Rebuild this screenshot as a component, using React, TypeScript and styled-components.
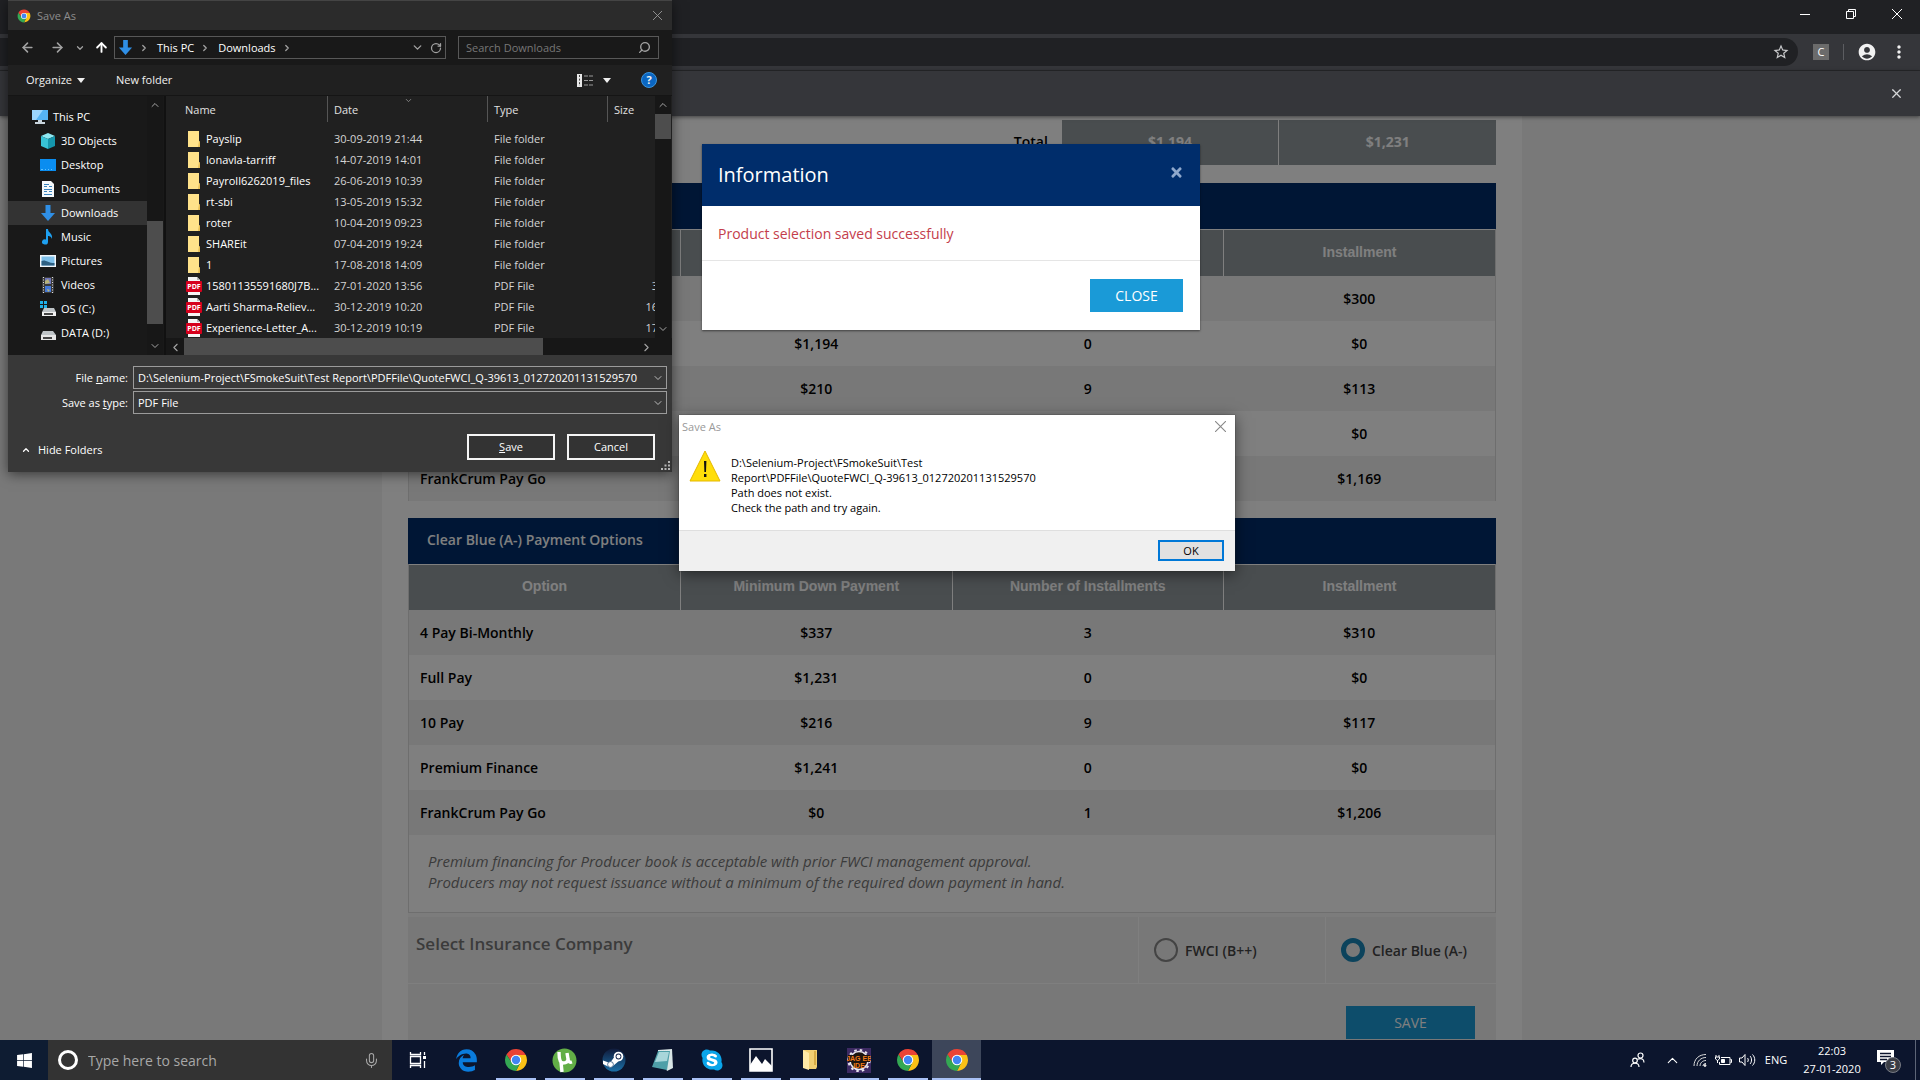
import React from 'react';
import styled, { createGlobalStyle, css } from 'styled-components';
import { FaEdgeLegacy, FaSkype, FaTimes, FaWindows } from 'react-icons/fa';
import { MdAccountCircle, MdMoreVert, MdStarBorder } from 'react-icons/md';
import {
  ArrowLeft, ArrowRight, ArrowUp, ChevronDown, ChevronLeft, ChevronRight, ChevronUp, Mic, RotateCw, Search, X,
} from 'lucide-react';

const GlobalStyle = createGlobalStyle`
  *, *::before, *::after { box-sizing: border-box; }
  body { margin: 0; overflow: hidden; font-family: "Open Sans", "Noto Sans", sans-serif; }
  button, input, select { font: inherit; color: inherit; margin: 0; }
  button { border: 0; padding: 0; background: none; cursor: pointer; }
  svg { display: block; flex: none; }
`;

/* ---------- desktop and browser ---------- */

const Desktop = styled.div`
  position: relative;
  display: flex;
  flex-direction: column;
  height: 100vh;
  overflow: hidden;
`;

const Browser = styled.main`
  flex: 1;
  min-height: 0;
  display: flex;
  flex-direction: column;
`;

const TitleBar = styled.header`
  display: flex;
  justify-content: flex-end;
  height: 34px;
  background: #202124;
  color: #fff;
`;

const WindowButton = styled.button`
  display: grid;
  place-items: center;
  width: 46px;
  height: 28px;
`;

const Toolbar = styled.div`
  display: flex;
  align-items: center;
  height: 37px;
  padding-right: 10px;
  background: #35363a;
  border-bottom: 1px solid #27282b;
  color: #f1f1f1;
`;

const Omnibox = styled.div`
  flex: 1;
  display: flex;
  align-items: center;
  justify-content: flex-end;
  height: 28px;
  margin-right: 15px;
  padding-right: 8px;
  border-radius: 0 14px 14px 0;
  background: #202124;
  color: #c8c9cb;
`;

const Extension = styled.button`
  width: 16px;
  height: 16px;
  background: #6b6b6b;
  color: #fff;
  font-size: 11px;
  line-height: 16px;
`;

const Separator = styled.span`
  width: 1px;
  height: 16px;
  margin: 0 12px 0 14px;
  background: #5c5d61;
`;

const ToolbarButton = styled.button`
  display: grid;
  place-items: center;
  width: 22px;
  height: 28px;
  & + & { margin-left: 10px; }
`;

const InfoBar = styled.div`
  position: relative;
  display: flex;
  align-items: center;
  justify-content: flex-end;
  height: 45px;
  padding-right: 16px;
  background: #35363a;
  box-shadow: 0 1px 4px rgba(0, 0, 0, 0.5);
  color: #d5d6d8;
  z-index: 1;
`;

/* ---------- web page ---------- */

const Viewport = styled.div`
  position: relative;
  flex: 1;
  min-height: 0;
  overflow: hidden;
  padding-right: 16px;
  background: #f2f2f2;
`;

const Column = styled.div`
  max-width: 1140px;
  height: 100%;
  margin: 0 auto;
  padding: 4px 26px 0;
  background: #fff;
  color: #000;
  font-size: 14px;
  font-weight: 600;
`;

const TotalRow = styled.div`
  display: grid;
  grid-template-columns: 3fr 1fr 1fr;
  height: 45px;
  margin-bottom: 18px;
  line-height: 44px;
  text-align: center;
`;

const TotalLabel = styled.span`
  padding-right: 13px;
  text-align: right;
`;

const TotalCell = styled.span`
  border-left: 1px solid #fff;
  background: #939b9f;
  color: #fff;
  font-weight: 700;
`;

const Panel = styled.section<{ $closed?: boolean }>`
  border: 1px solid #dcdcdc;
  border-width: ${(p) => (p.$closed ? '0 1px 1px' : '0 1px')};
`;

const PanelTitle = styled.h2`
  height: 46px;
  margin: 0 -1px;
  padding-left: 19px;
  background: #002d6b;
  color: #fff;
  font-size: 14px;
  font-weight: 600;
  line-height: 44px;
`;

const OptionTable = styled.table`
  width: 100%;
  table-layout: fixed;
  border-collapse: collapse;
  border-top: 1px solid #fff;
  text-align: center;

  th {
    height: 46px;
    padding: 0 0 2px;
    background: #939b9f;
    color: #fff;
    font: bold 14px/20px "Liberation Sans", Arial, sans-serif;
  }
  th + th { border-left: 1px solid #fff; }
  td { height: 45px; padding: 0; }
  td:first-child { padding-left: 11px; text-align: left; }
  tbody tr:nth-child(odd) { background: #f1f1f1; }
`;

const Spacer = styled.div`
  height: 17px;
`;

const Note = styled.p`
  margin: 0;
  padding: 16px 19px 19px;
  color: #777;
  font-size: 15px;
  font-style: italic;
  font-weight: 500;
  line-height: 21px;
`;

const CompanyRow = styled.fieldset`
  display: flex;
  height: 71px;
  margin: 0;
  padding: 0;
  border: 0;
  border-top: 4px solid #f8f8f8;
  border-bottom: 1px solid #fff;
  background: #f1f1f1;
`;

const CompanyTitle = styled.h3`
  flex: 1;
  margin: 0;
  padding: 14px 0 0 8px;
  color: #777;
  font-size: 17px;
  font-weight: 600;
  line-height: 26px;
`;

const CompanyChoice = styled.label<{ $width: number }>`
  display: flex;
  align-items: center;
  gap: 7px;
  width: ${(p) => p.$width}px;
  padding-left: 15px;
  border-left: 1px solid #fff;
  color: #444;

  input {
    appearance: none;
    width: 24px;
    height: 24px;
    border: 2px solid #888;
    border-radius: 50%;
  }
  input:checked { border: 5px solid #1886b8; }
`;

const SaveRow = styled.div`
  display: flex;
  justify-content: flex-end;
  height: 100px;
  padding: 22px 21px 0 0;
  background: #f1f1f1;
`;

const BlueButton = styled.button<{ $wide?: boolean }>`
  width: ${(p) => (p.$wide ? 129 : 93)}px;
  height: 33px;
  background: #1a9ad7;
  color: #fff;
  font-size: 14px;
  font-weight: 400;
`;

const Backdrop = styled.div`
  position: absolute;
  inset: 0;
  display: flex;
  align-items: flex-start;
  justify-content: center;
  padding: 28px 18px 0 0;
  background: rgba(0, 0, 0, 0.5);
`;

const Modal = styled.section`
  width: 498px;
  background: #fff;
  box-shadow: 0 1px 2px rgba(0, 0, 0, 0.5);
  font-size: 14px;
`;

const ModalHeader = styled.header`
  display: flex;
  justify-content: space-between;
  height: 62px;
  padding: 0 16px;
  background: #002d6b;
  color: #fff;

  h2 {
    margin: 0;
    font-size: 20px;
    font-weight: 400;
    line-height: 61px;
  }
  button {
    height: 56px;
    color: #8fa8cc;
  }
`;

const ModalMessage = styled.p`
  margin: 0;
  padding: 17px 16px 16px;
  border-bottom: 1px solid #e5e5e5;
  color: #c43d4b;
  line-height: 21px;
`;

const ModalFooter = styled.footer`
  display: flex;
  justify-content: flex-end;
  padding: 18px 17px;
`;

/* ---------- Save As dialog ---------- */

const SaveDialog = styled.section`
  position: absolute;
  top: 0;
  left: 8px;
  width: 664px;
  z-index: 2;
  border-top: 1px solid #444;
  box-shadow: 0 2px 12px rgba(0, 0, 0, 0.55);
  background: #383838;
  color: #fff;
  font-size: 11px;
  line-height: 16px;
`;

const DialogTitle = styled.header`
  display: flex;
  align-items: center;
  gap: 6px;
  height: 29px;
  padding: 0 10px 0 9px;
  background: #2b2b2b;
  color: #8d8d8d;
  button { margin-left: auto; }
`;

const NavRow = styled.div`
  display: flex;
  align-items: center;
  height: 35px;
  padding: 0 13px 0 12px;
  background: #191919;
  color: #a2a2a2;
`;

const NavButton = styled.button<{ $width: number; $bright?: boolean }>`
  display: flex;
  width: ${(p) => p.$width}px;
  ${(p) => p.$bright && css`color: #fff;`}
`;

const AddressBar = styled.nav`
  display: flex;
  align-items: center;
  gap: 6px;
  width: 332px;
  height: 23px;
  padding: 0 3px;
  border: 1px solid #585858;
  button { color: inherit; }
  span { flex: 1; }
`;

const Crumb = styled.a`
  color: #fff;
  text-decoration: none;
  padding-left: 2px;
`;

const SearchBox = styled.label`
  flex: 1;
  display: flex;
  align-items: center;
  height: 23px;
  margin-left: 12px;
  padding: 0 7px;
  border: 1px solid #585858;

  input {
    flex: 1;
    min-width: 0;
    padding: 0;
    border: 0;
    outline: 0;
    background: none;
  }
  input::placeholder { color: #777; opacity: 1; }
  svg { transform: scaleX(-1); }
`;

const CommandRow = styled.div`
  display: flex;
  align-items: center;
  height: 31px;
  padding: 0 15px 0 18px;
  background: #202020;
  border-bottom: 1px solid #151515;
  color: #f0f0f0;
`;

const Command = styled.button`
  display: flex;
  align-items: center;
  gap: 5px;
  height: 24px;
  margin-right: 31px;
`;

const CommandTools = styled.div`
  display: flex;
  align-items: center;
  gap: 9px;
  margin-left: auto;
`;

const HelpButton = styled.button`
  width: 16px;
  height: 16px;
  margin-left: 21px;
  border: 1px solid #3b94dd;
  border-radius: 50%;
  background: #0a66c2;
  font-weight: 700;
  line-height: 14px;
`;

const Explorer = styled.div`
  display: flex;
  height: 259px;
`;

const Sidebar = styled.nav`
  display: flex;
  width: 158px;
  background: #191919;
  border-right: 2px solid #111;
`;

const Places = styled.ul`
  flex: 1;
  margin: 0;
  padding: 9px 0 0;
  list-style: none;
`;

const Place = styled.li<{ $root?: boolean; $active?: boolean }>`
  padding-left: ${(p) => (p.$root ? 24 : 32)}px;
  background: ${(p) => (p.$active ? '#333' : 'none')};
  a {
    display: flex;
    align-items: center;
    gap: 5px;
    height: 24px;
    color: #fff;
    text-decoration: none;
  }
`;

const ScrollBar = styled.div<{ $horizontal?: boolean }>`
  position: relative;
  display: flex;
  flex-direction: ${(p) => (p.$horizontal ? 'row' : 'column')};
  ${(p) => (p.$horizontal ? 'height: 17px;' : 'width: 16px; margin-right: 1px;')}
  background: #171717;
  color: #a5a5a5;
  button {
    display: grid;
    place-items: center;
    width: ${(p) => (p.$horizontal ? 18 : 16)}px;
    height: 18px;
  }
`;

const Thumb = styled.span<{ $size: number }>`
  flex: ${(p) => p.$size} 1 0;
  background: #4d4d4d;
`;

const Track = styled.span<{ $grow: number }>`
  flex: ${(p) => p.$grow} 1 0;
`;

const FilePane = styled.div`
  flex: 1;
  min-width: 0;
  display: flex;
  flex-direction: column;
  background: #202020;
`;

const FileArea = styled.div`
  flex: 1;
  min-height: 0;
  display: flex;
`;

const FileTable = styled.table`
  flex: 1;
  height: 242px;
  table-layout: fixed;
  border-collapse: collapse;
  text-align: left;

  th { height: 32px; padding: 0; vertical-align: top; font-weight: 400; color: #e0e0e0; }
  th span { position: relative; display: block; height: 26px; padding-left: 6px; border-left: 1px solid #555; line-height: 28px; }
  th:first-child span { padding-left: 18px; border-color: transparent; }
  td { height: 21px; padding: 0 0 0 7px; color: #d4d4d4; white-space: nowrap; }
  td:first-child { padding-left: 20px; color: #fff; }
  td:last-child { padding: 0; text-align: right; }
`;

const SortMark = styled(ChevronDown)`
  position: absolute;
  top: 0;
  left: calc(50% - 4px);
  color: #999;
`;

const FileName = styled.span`
  display: flex;
  align-items: center;
  gap: 4px;
`;

const FileSize = styled.span`
  display: block;
  margin-right: -3px;
`;

const SaveForm = styled.form`
  display: grid;
  grid-template-columns: 120px 1fr;
  gap: 2px 5px;
  padding: 11px 5px 12px 0;
  > label { text-align: right; line-height: 23px; }
`;

const Combo = styled.div`
  display: flex;
  align-items: center;
  height: 23px;
  padding: 0 2px 0 4px;
  border: 1px solid #9b9b9b;
  color: #bbb;

  input, select {
    flex: 1;
    min-width: 0;
    height: 21px;
    padding: 0;
    border: 0;
    outline: 0;
    appearance: none;
    background: none;
    color: #fff;
  }
`;

const FormFooter = styled.div`
  grid-column: 1 / -1;
  display: flex;
  align-items: flex-end;
  gap: 12px;
  padding: 18px 12px 0 13px;
`;

const HideFolders = styled.button`
  display: flex;
  align-items: center;
  gap: 7px;
  margin-right: auto;
  line-height: 20px;
`;

const OutlineButton = styled.button`
  width: 88px;
  height: 26px;
  border: 2px solid #f5f5f5;
  background: #333;
`;

const Grip = styled.svg`
  position: absolute;
  right: 2px;
  bottom: 2px;
`;

/* ---------- path error dialog ---------- */

const ErrorDialog = styled.section`
  position: absolute;
  top: 415px;
  left: 679px;
  width: 556px;
  z-index: 3;
  background: #fff;
  box-shadow: 0 3px 14px rgba(0, 0, 0, 0.5), 0 0 1px #333;
  color: #000;
  font-size: 11px;
  line-height: 15px;
`;

const ErrorTitle = styled.header`
  display: flex;
  align-items: center;
  justify-content: space-between;
  height: 23px;
  padding: 0 9px 0 3px;
  color: #999;
`;

const ErrorBody = styled.div`
  display: flex;
  gap: 10px;
  height: 92px;
  padding: 12px 10px 0;
  p { margin: 5px 0 0; white-space: pre-line; }
`;

const ErrorFooter = styled.footer`
  display: flex;
  justify-content: flex-end;
  padding: 9px 11px 10px;
  border-top: 1px solid #dfdfdf;
  background: #f0f0f0;
  button {
    width: 66px;
    height: 21px;
    border: 2px solid #0078d7;
    background: #e1e1e1;
  }
`;

/* ---------- taskbar ---------- */

const TaskBar = styled.footer`
  display: flex;
  align-items: stretch;
  height: 40px;
  background: #0c152d;
  color: #fff;
`;

const StartButton = styled.button`
  display: grid;
  place-items: center;
  width: 48px;
  background: #0e1c32;
`;

const TaskSearch = styled.label`
  display: flex;
  align-items: center;
  width: 344px;
  margin-right: 1px;
  padding: 0 12px 0 10px;
  background: #333;
  color: #a8a8a8;
  font-size: 14px;
  input {
    flex: 1;
    min-width: 0;
    margin-left: 10px;
    padding: 0;
    border: 0;
    outline: 0;
    background: none;
  }
  input::placeholder { color: #a8a8a8; opacity: 1; }
`;

const Ring = styled.span`
  width: 20px;
  height: 20px;
  border: 3px solid #fff;
  border-radius: 50%;
`;

const TaskButton = styled.button<{ $running?: boolean; $active?: boolean }>`
  display: grid;
  place-items: center;
  width: 49px;
  background: ${(p) => {
    const line = p.$active ? '100% 2px' : '40px 2px';
    return p.$running ? `linear-gradient(#a9c1f5, #a9c1f5) bottom / ${line} no-repeat` : 'none';
  }};
  background-color: ${(p) => (p.$active ? '#3d465a' : 'transparent')};
`;

const Tray = styled.div`
  display: flex;
  align-items: center;
  margin-left: auto;
  padding-right: 4px;
  font-size: 11px;
  line-height: 18px;
`;

const TrayButton = styled.button<{ $width: number }>`
  display: grid;
  place-items: center;
  width: ${(p) => p.$width}px;
  height: 40px;
`;

const Clock = styled.time`
  width: 78px;
  text-align: center;
  white-space: pre-line;
`;

const DesktopEdge = styled.span`
  width: 1px;
  height: 40px;
  margin-left: 8px;
  background: #5d6577;
`;

/* ---------- drawings ---------- */

const ChromeIcon = ({ size }: { size: number }) => (
  <svg width={size} height={size} viewBox="0 0 48 48">
    <path fill="#ea4335" d="M24 14h19.6A22 22 0 0 0 4.95 13L15.3 29Z" />
    <path fill="#fbc116" d="M24 14h19.6A22 22 0 0 1 24 46l8.7-17Z" />
    <path fill="#34a853" d="M32.7 29 24 46A22 22 0 0 1 4.95 13L15.3 29Z" />
    <circle cx="24" cy="24" r="10.5" fill="#fff" />
    <circle cx="24" cy="24" r="8.4" fill="#4285f4" />
  </svg>
);

const DownloadArrow = ({ size = 16 }: { size?: number }) => (
  <svg width={size} height={size} viewBox="0 0 16 16">
    <path fill="#2f8fe6" d="M5.5 0h5v8H15l-7 8-7-8h4.5Z" />
  </svg>
);

const FolderIcon = () => (
  <svg width="16" height="16" viewBox="0 0 16 16">
    <path fill="#ffe28a" d="M2 0h11v10l1 1v5H2Z" />
    <path fill="#e8bf55" d="M13 10l1 1v5h-2Z" />
  </svg>
);

const PdfIcon = () => (
  <svg width="16" height="18" viewBox="0 0 16 18">
    <path fill="#f5f5f5" d="M2 0h9l3 3v15H2Z" />
    <path fill="#b9b9b9" d="M11 0l3 3h-3Z" />
    <rect y="4" width="16" height="11" rx="1" fill="#d6001c" />
    <text x="8" y="12" textAnchor="middle" fontSize="7" fontWeight="700" fill="#fff" fontFamily="Open Sans, sans-serif">PDF</text>
  </svg>
);

const placeDrawings: Record<string, React.ReactNode> = {
  pc: (
    <>
      <path fill="#56b4f5" d="M0 1h16v10H0Z" />
      <path fill="#9bd6ff" d="M0 1h11L4 11H0Z" />
      <path fill="#c9d5de" d="M6 11h4v2h3v2H3v-2h3Z" />
    </>
  ),
  cube: (
    <>
      <path fill="#8fe9f2" d="M8 0l7 3-7 3-7-3Z" />
      <path fill="#38c3d6" d="M1 3l7 3v10l-7-3Z" />
      <path fill="#1596ac" d="M15 3L8 6v10l7-3Z" />
    </>
  ),
  desktop: (
    <>
      <path fill="#0a8df0" d="M0 2h16v12H0Z" />
      <path fill="#5bc0ff" d="M1 12h2v1H1Zm4 0h1v1H5Zm3 0h1v1H8Zm3 0h1v1h-1Z" />
    </>
  ),
  document: (
    <>
      <path fill="#f4f8fb" d="M2 0h9l3 3v13H2Z" />
      <path stroke="#3b83bd" d="M4 3.5h5M4 5.5h3M9 5.5h3M4 8.5h8M4 10.5h3M9 10.5h3M4 13.5h8" />
    </>
  ),
  music: <path fill="#1ea0f0" d="M6 0h2c0 4 5 4 4 10-1-3-3-3-4-3v6a3 2.6 0 1 1-2-2.5Z" />,
  picture: (
    <>
      <path fill="#f2f6fa" d="M0 2h16v12H0Z" />
      <path fill="#7fc0ea" d="M1.5 3.5h13v9h-13Z" />
      <path fill="#2d5f82" d="M1.5 8c4-2 6 2 13 2v2.5h-13Z" />
    </>
  ),
  video: (
    <>
      <path fill="#3a3a3a" d="M2 0h12v16H2Z" />
      <path fill="#7076b8" d="M5 1h6v6H5Z" />
      <path fill="#4377d6" d="M5 9h6v6H5Z" />
      <path fill="#b8b47a" d="M5 4l3-2 2 4-5 1ZM7 12l3 1-2 2Z" />
      <path stroke="#ddd" strokeDasharray="1 1.5" d="M3.5 0v16M12.5 0v16" />
    </>
  ),
  os: (
    <>
      <path fill="#1fb0e8" d="M0 0h3v3H0Zm4 0h3v3H4ZM0 4h3v3H0Zm4 0h3v3H4Z" />
      <path fill="#bfc4c7" d="M4 7h10l2 4H2Z" />
      <path fill="#f0f0f0" d="M2 11h14v4H2Z" />
      <path fill="#444" d="M4 12h9v2H4Z" />
    </>
  ),
  drive: (
    <>
      <path fill="#bfc4c7" d="M3 6h10l3 4H1Z" />
      <path fill="#e6e6e6" d="M1 10h15v5H1Z" />
      <path fill="#444" d="M3 12h9v2H3Z" />
    </>
  ),
};

const PlaceIcon = ({ kind }: { kind: string }) =>
  kind === 'download' ? <DownloadArrow /> : (
    <svg width="16" height="16" viewBox="0 0 16 16" fill="none">{placeDrawings[kind]}</svg>
  );

const Caret = () => (
  <svg width="8" height="5" viewBox="0 0 8 5"><path fill="currentColor" d="M0 0h8L4 5Z" /></svg>
);

const ViewIcon = () => (
  <svg width="17" height="13" viewBox="0 0 17 13" stroke="#9a9a9a" fill="none">
    <path fill="#e8e8e8" stroke="none" d="M0 0h5v13H0Z" />
    <path stroke="#444" strokeDasharray="2 1.6" d="M2.5 1v11" />
    <path strokeDasharray="4 1" d="M7 2h10M7 6.5h10M7 11h10" />
  </svg>
);

const WarningIcon = () => (
  <svg width="32" height="32" viewBox="0 0 32 32">
    <path fill="#ffde0a" stroke="#e5b800" d="M16 1 31 31H1Z" strokeLinejoin="round" />
    <path fill="#111" d="M15 11h2.4l-.4 11h-1.6ZM15 24h2.4v3H15Z" />
  </svg>
);

const TaskViewIcon = () => (
  <svg width="18" height="18" viewBox="0 0 18 18" fill="none" stroke="#fff" strokeWidth="1.3">
    <path d="M1.5 1v2.5h10V1M1.5 17v-2.5h10V17M1.5 5.500h10v7h-10ZM15.500 1v3M15.500 10v7" />
    <path fill="#fff" stroke="none" d="M14 5h3v3h-3Z" />
  </svg>
);

const UTorrentIcon = () => (
  <svg width="25" height="25" viewBox="0 0 25 25">
    <circle cx="12.5" cy="12.5" r="12" fill="#62ae46" />
    <path fill="none" stroke="#fff" strokeWidth="3.4" d="M7 4c0 6 1 11 4 11s5-1 5-4l-1-6M9 14l1 10M16 10c0 3 1 5 4 4" />
  </svg>
);

const SteamIcon = () => (
  <svg width="24" height="24" viewBox="0 0 24 24">
    <defs>
      <linearGradient id="steam" x1="0" y1="0" x2="0" y2="1">
        <stop offset="0" stopColor="#101a3a" />
        <stop offset="1" stopColor="#1b6fa6" />
      </linearGradient>
    </defs>
    <circle cx="12" cy="12" r="11.5" fill="url(#steam)" />
    <path fill="#fff" d="M1 12.500l7 2.500 5-7 5 4-7 6-3 1.500L1 16Z" />
    <circle cx="16.500" cy="8.500" r="4.800" fill="#fff" />
    <circle cx="16.500" cy="8.500" r="2.900" fill="#16274c" />
    <circle cx="16.500" cy="8.500" r="2" fill="#fff" />
    <circle cx="8.500" cy="16.500" r="2.900" fill="#fff" stroke="#16406e" strokeWidth=".7" />
  </svg>
);

const NotepadIcon = () => (
  <svg width="24" height="24" viewBox="0 0 24 24">
    <path fill="#d9e6e6" d="M7 2l14-1 1 19-6 3Z" />
    <path fill="#4f9fa8" d="M7 3h12l-3 19L1 19Z" />
    <path fill="#a8d6da" d="M8 4h10l-2 9L4 14Z" />
    <path stroke="#dfe9ea" strokeDasharray="1 1" d="M7 2.5h13" />
  </svg>
);

const PhotosIcon = () => (
  <svg width="24" height="24" viewBox="0 0 24 24">
    <path fill="#0c152d" stroke="#fff" strokeWidth="1.6" d="M1 1h22v22H1Z" />
    <path fill="#fff" d="M1 17l6-9 6 8 3-5 7 7v5H1Z" />
  </svg>
);

const TaskFolderIcon = () => (
  <svg width="16" height="22" viewBox="0 0 16 22">
    <path fill="#f2cf72" d="M1 1h14v17l-1 2H6Z" />
    <path fill="#ffe9a6" d="M1 1l6 3v17l-6-2Z" />
    <path fill="#d8ac46" d="M12 2h2v14h-2Z" />
  </svg>
);

const IdeIcon = () => (
  <svg width="24" height="25" viewBox="0 0 24 25">
    <path fill="#3d2a63" d="M0 0h24v25H0Z" />
    <circle cx="12" cy="12.5" r="9" fill="#1c1410" stroke="#e8e4ee" strokeWidth="1.6" />
    <circle cx="12" cy="12.5" r="10.6" fill="none" stroke="#e8e4ee" strokeWidth="2" strokeDasharray="2.5 3.1" />
    <path fill="#1c1410" d="M1 7h22v7H1Z" />
    <g fill="#f07a18" fontSize="7" fontWeight="700" textAnchor="middle" fontFamily="Liberation Sans, sans-serif">
      <text x="12" y="13">JAG EE</text>
      <text x="12" y="20">IDE</text>
    </g>
  </svg>
);

const SkypeIcon = () => (
  <svg width="24" height="24" viewBox="0 0 24 24">
    <circle cx="12" cy="12" r="7" fill="#fff" />
    <FaSkype size={24} color="#0aa5ea" />
  </svg>
);

const PeopleIcon = () => (
  <svg width="15" height="16" viewBox="0 0 15 16" fill="none" stroke="#fff" strokeWidth="1.2">
    <circle cx="10.5" cy="3.5" r="2.5" />
    <circle cx="5" cy="8.5" r="2.3" />
    <path d="M7.5 7.2c4-1.500 6.500 0 6.500 3.300M1 15c0-5 8-5 8 0" />
  </svg>
);

const WifiIcon = () => (
  <svg width="14" height="14" viewBox="0 0 14 14" fill="none" stroke="#ddd">
    <path d="M1 13C1 6 6 1.5 13 1.5M4 13c0-5 4-8.5 9-8.5M7 13c0-3 2.5-5.5 6-5.5M10 13c0-1.5 1-2.5 3-2.5" />
    <circle cx="12" cy="12.5" r="1" fill="#fff" />
  </svg>
);

const BatteryIcon = () => (
  <svg width="17" height="13" viewBox="0 0 17 13" fill="none" stroke="#fff">
    <path d="M6 3.5h9v7H4.5V8M15.5 5.5h1v3h-1M1 1v2M4 1v2M.5 3h4v2l-2 1.5-2-1.5ZM2.5 6v3" />
    <path fill="#fff" d="M6.5 5.5h3v3h-3Z" />
  </svg>
);

const VolumeIcon = () => (
  <svg width="17" height="14" viewBox="0 0 17 14" fill="none" stroke="#fff">
    <path d="M.5 5h2.5l3-3.5v11L3 9H.5ZM8.5 5c1 1 1 3 0 4M11 3c2 2 2 6 0 8M13.5 1.5c3 3 3 8 0 11" />
  </svg>
);

const ActionCenterIcon = () => (
  <svg width="26" height="26" viewBox="0 0 26 26">
    <path fill="#fff" d="M1 3h17v12H8l-3 3v-3H1Z" />
    <path stroke="#0c152d" strokeWidth="1.3" d="M4 6.5h11M4 9.5h11M4 12.5h7" />
    <circle cx="17" cy="18" r="7.5" fill="#3a3d45" stroke="#777b84" />
    <text x="17" y="22" textAnchor="middle" fontSize="11" fill="#fff" fontFamily="Open Sans, sans-serif">3</text>
  </svg>
);

const MinimizeIcon = () => <svg width="10" height="10"><path stroke="#fff" d="M0 5.5h10" /></svg>;
const RestoreIcon = () => (
  <svg width="10" height="10" fill="none" stroke="#fff"><path d="M.5 2.5h7v7h-7ZM2.5 2.5v-2h7v7h-2" /></svg>
);
const CrossIcon = ({ size, color }: { size: number; color: string }) => (
  <svg width={size} height={size} viewBox="0 0 10 10" stroke={color}><path d="M0 0l10 10M10 0L0 10" /></svg>
);

/* ---------- data ---------- */

type OptionRow = [string, string, number, string];

const fwciRows: OptionRow[] = [
  ['4 Pay Bi-Monthly', '$327', 3, '$300'],
  ['Full Pay', '$1,194', 0, '$0'],
  ['10 Pay', '$210', 9, '$113'],
  ['Premium Finance', '$1,204', 0, '$0'],
  ['FrankCrum Pay Go', '$0', 1, '$1,169'],
];

const clearBlueRows: OptionRow[] = [
  ['4 Pay Bi-Monthly', '$337', 3, '$310'],
  ['Full Pay', '$1,231', 0, '$0'],
  ['10 Pay', '$216', 9, '$117'],
  ['Premium Finance', '$1,241', 0, '$0'],
  ['FrankCrum Pay Go', '$0', 1, '$1,206'],
];

const places: [string, string][] = [
  ['This PC', 'pc'], ['3D Objects', 'cube'], ['Desktop', 'desktop'], ['Documents', 'document'], ['Downloads', 'download'],
  ['Music', 'music'], ['Pictures', 'picture'], ['Videos', 'video'], ['OS (C:)', 'os'], ['DATA (D:)', 'drive'],
];

const files: [string, string, string][] = [
  ['Payslip', '30-09-2019 21:44', ''],
  ['lonavla-tarriff', '14-07-2019 14:01', ''],
  ['Payroll6262019_files', '26-06-2019 10:39', ''],
  ['rt-sbi', '13-05-2019 15:32', ''],
  ['roter', '10-04-2019 09:23', ''],
  ['SHAREit', '07-04-2019 19:24', ''],
  ['1', '17-08-2018 14:09', ''],
  ['15801135591680J7B...', '27-01-2020 13:56', '3'],
  ['Aarti Sharma-Reliev...', '30-12-2019 10:20', '16'],
  ['Experience-Letter_A...', '30-12-2019 10:19', '17'],
];

const tasks: { name: string; icon: React.ReactNode; running?: boolean; active?: boolean }[] = [
  { name: 'Task View', icon: <TaskViewIcon /> },
  { name: 'Edge', icon: <FaEdgeLegacy size={23} color="#0a7bdc" /> },
  { name: 'Chrome', icon: <ChromeIcon size={24} />, running: true },
  { name: 'uTorrent', icon: <UTorrentIcon />, running: true },
  { name: 'Steam', icon: <SteamIcon />, running: true },
  { name: 'Notepad', icon: <NotepadIcon />, running: true },
  { name: 'Skype', icon: <SkypeIcon />, running: true },
  { name: 'Photos', icon: <PhotosIcon />, running: true },
  { name: 'File Explorer', icon: <TaskFolderIcon />, running: true },
  { name: 'Jagee IDE', icon: <IdeIcon />, running: true },
  { name: 'Chrome profile', icon: <ChromeIcon size={24} />, running: true },
  { name: 'Chrome test window', icon: <ChromeIcon size={24} />, running: true, active: true },
];

const PaymentOptions = ({ title, rows, children }: { title: string; rows: OptionRow[]; children?: React.ReactNode }) => (
  <Panel $closed={Boolean(children)}>
    <PanelTitle>{title}</PanelTitle>
    <OptionTable>
      <thead>
        <tr>
          <th>Option</th>
          <th>Minimum Down Payment</th>
          <th>Number of Installments</th>
          <th>Installment</th>
        </tr>
      </thead>
      <tbody>
        {rows.map((row) => (
          <tr key={row[0]}>{row.map((value, i) => <td key={i}>{value}</td>)}</tr>
        ))}
      </tbody>
    </OptionTable>
    {children}
  </Panel>
);

const SaveAs = () => (
  <SaveDialog role="dialog" aria-label="Save As">
    <DialogTitle>
      <ChromeIcon size={14} />
      Save As
      <button aria-label="Close"><CrossIcon size={9} color="#999" /></button>
    </DialogTitle>
    <NavRow>
      <NavButton $width={30} aria-label="Back"><ArrowLeft size={15} strokeWidth={2.5} /></NavButton>
      <NavButton $width={25} aria-label="Forward"><ArrowRight size={15} strokeWidth={2.5} /></NavButton>
      <NavButton $width={19} aria-label="Recent locations"><ChevronDown size={10} strokeWidth={3} /></NavButton>
      <NavButton $width={20} $bright aria-label="Up"><ArrowUp size={15} strokeWidth={3} /></NavButton>
      <AddressBar aria-label="Address">
        <DownloadArrow size={15} />
        <ChevronRight size={10} strokeWidth={3} />
        <Crumb href="#this-pc">This PC</Crumb>
        <ChevronRight size={10} strokeWidth={3} />
        <Crumb href="#downloads">Downloads</Crumb>
        <ChevronRight size={10} strokeWidth={3} />
        <span />
        <button aria-label="Previous locations"><ChevronDown size={13} strokeWidth={2.5} /></button>
        <button aria-label="Refresh"><RotateCw size={12} strokeWidth={2.5} /></button>
      </AddressBar>
      <SearchBox>
        <input type="text" placeholder="Search Downloads" aria-label="Search Downloads" />
        <Search size={13} strokeWidth={2.5} />
      </SearchBox>
    </NavRow>
    <CommandRow>
      <Command>Organize<Caret /></Command>
      <Command>New folder</Command>
      <CommandTools>
        <button aria-label="Change view"><ViewIcon /></button>
        <button aria-label="More views"><Caret /></button>
        <HelpButton aria-label="Help">?</HelpButton>
      </CommandTools>
    </CommandRow>
    <Explorer>
      <Sidebar aria-label="Places">
        <Places>
          {places.map(([name, kind], i) => (
            <Place key={name} $root={i === 0} $active={name === 'Downloads'}>
              <a href={`#${kind}`}><PlaceIcon kind={kind} />{name}</a>
            </Place>
          ))}
        </Places>
        <ScrollBar>
          <button aria-label="Scroll up"><ChevronUp size={12} /></button>
          <Track $grow={107} />
          <Thumb $size={103} />
          <Track $grow={13} />
          <button aria-label="Scroll down"><ChevronDown size={12} /></button>
        </ScrollBar>
      </Sidebar>
      <FilePane>
        <FileArea>
          <FileTable>
            <colgroup>
              <col width="161" />
              <col width="160" />
              <col width="120" />
              <col />
            </colgroup>
            <thead>
              <tr>
                <th><span>Name</span></th>
                <th><span>Date<SortMark size={9} /></span></th>
                <th><span>Type</span></th>
                <th><span>Size</span></th>
              </tr>
            </thead>
            <tbody>
              {files.map(([name, date, size]) => (
                <tr key={name}>
                  <td><FileName>{size ? <PdfIcon /> : <FolderIcon />}{name}</FileName></td>
                  <td>{date}</td>
                  <td>{size ? 'PDF File' : 'File folder'}</td>
                  <td><FileSize>{size}</FileSize></td>
                </tr>
              ))}
            </tbody>
          </FileTable>
          <ScrollBar>
            <button aria-label="Scroll up"><ChevronUp size={12} /></button>
            <Thumb $size={25} />
            <Track $grow={181} />
            <button aria-label="Scroll down"><ChevronDown size={12} /></button>
          </ScrollBar>
        </FileArea>
        <ScrollBar $horizontal>
          <button aria-label="Scroll left"><ChevronLeft size={13} /></button>
          <Thumb $size={357} />
          <Track $grow={94} />
          <button aria-label="Scroll right"><ChevronRight size={13} /></button>
          <Track $grow={16} />
        </ScrollBar>
      </FilePane>
    </Explorer>
    <SaveForm onSubmit={(e) => e.preventDefault()}>
      <label htmlFor="file-name">File <u>n</u>ame:</label>
      <Combo>
        <input
          id="file-name"
          type="text"
          defaultValue="D:\Selenium-Project\FSmokeSuit\Test Report\PDFFile\QuoteFWCI_Q-39613_012720201131529570"
        />
        <ChevronDown size={12} />
      </Combo>
      <label htmlFor="file-type">Save as <u>t</u>ype:</label>
      <Combo>
        <select id="file-type" defaultValue="pdf">
          <option value="pdf">PDF File</option>
        </select>
        <ChevronDown size={12} />
      </Combo>
      <FormFooter>
        <HideFolders type="button"><ChevronUp size={10} strokeWidth={3} />Hide Folders</HideFolders>
        <OutlineButton type="submit"><u>S</u>ave</OutlineButton>
        <OutlineButton type="button">Cancel</OutlineButton>
      </FormFooter>
    </SaveForm>
    <Grip width="9" height="9" viewBox="0 0 9 9">
      <path fill="#bbb" d="M7 0h2v2H7Zm0 3.5h2v2H7ZM7 7h2v2H7ZM3.5 3.5h2v2h-2Zm0 3.5h2v2h-2ZM0 7h2v2H0Z" />
    </Grip>
  </SaveDialog>
);

const PathError = () => (
  <ErrorDialog role="alertdialog" aria-label="Save As">
    <ErrorTitle>
      Save As
      <button aria-label="Close"><CrossIcon size={11} color="#888" /></button>
    </ErrorTitle>
    <ErrorBody>
      <WarningIcon />
      <p>{'D:\\Selenium-Project\\FSmokeSuit\\Test\nReport\\PDFFile\\QuoteFWCI_Q-39613_012720201131529570\nPath does not exist.\nCheck the path and try again.'}</p>
    </ErrorBody>
    <ErrorFooter><button>OK</button></ErrorFooter>
  </ErrorDialog>
);

export default function App() {
  return (
    <Desktop>
      <GlobalStyle />
      <Browser>
        <TitleBar>
          <WindowButton aria-label="Minimize"><MinimizeIcon /></WindowButton>
          <WindowButton aria-label="Restore"><RestoreIcon /></WindowButton>
          <WindowButton aria-label="Close window"><CrossIcon size={10} color="#fff" /></WindowButton>
        </TitleBar>
        <Toolbar>
          <Omnibox><MdStarBorder size={18} /></Omnibox>
          <Extension aria-label="Extension">C</Extension>
          <Separator />
          <ToolbarButton aria-label="Profile"><MdAccountCircle size={20} /></ToolbarButton>
          <ToolbarButton aria-label="Menu"><MdMoreVert size={20} /></ToolbarButton>
        </Toolbar>
        <InfoBar><button aria-label="Dismiss"><X size={15} /></button></InfoBar>
        <Viewport>
          <Column>
            <TotalRow>
              <TotalLabel>Total</TotalLabel>
              <TotalCell>$1,194</TotalCell>
              <TotalCell>$1,231</TotalCell>
            </TotalRow>
            <PaymentOptions title="FWCI (B++) Payment Options" rows={fwciRows} />
            <Spacer />
            <PaymentOptions title="Clear Blue (A-) Payment Options" rows={clearBlueRows}>
              <Note>
                Premium financing for Producer book is acceptable with prior FWCI management approval.
                <br />
                Producers may not request issuance without a minimum of the required down payment in hand.
              </Note>
            </PaymentOptions>
            <CompanyRow>
              <CompanyTitle>Select Insurance Company</CompanyTitle>
              <CompanyChoice $width={187}><input type="radio" name="company" />FWCI (B++)</CompanyChoice>
              <CompanyChoice $width={171}><input type="radio" name="company" defaultChecked />Clear Blue (A-)</CompanyChoice>
            </CompanyRow>
            <SaveRow><BlueButton $wide>SAVE</BlueButton></SaveRow>
          </Column>
          <Backdrop>
            <Modal role="dialog" aria-label="Information">
              <ModalHeader>
                <h2>Information</h2>
                <button aria-label="Close"><FaTimes size={15} /></button>
              </ModalHeader>
              <ModalMessage>Product selection saved successfully</ModalMessage>
              <ModalFooter><BlueButton>CLOSE</BlueButton></ModalFooter>
            </Modal>
          </Backdrop>
        </Viewport>
      </Browser>
      <SaveAs />
      <PathError />
      <TaskBar>
        <StartButton aria-label="Start"><FaWindows size={17} /></StartButton>
        <TaskSearch>
          <Ring />
          <input type="text" placeholder="Type here to search" aria-label="Type here to search" />
          <Mic size={17} strokeWidth={1.5} />
        </TaskSearch>
        {tasks.map((task) => (
          <TaskButton key={task.name} $running={task.running} $active={task.active} aria-label={task.name}>
            {task.icon}
          </TaskButton>
        ))}
        <Tray>
          <TrayButton $width={36} aria-label="People"><PeopleIcon /></TrayButton>
          <TrayButton $width={34} aria-label="Hidden icons"><ChevronUp size={17} strokeWidth={1.5} /></TrayButton>
          <TrayButton $width={22} aria-label="Network"><WifiIcon /></TrayButton>
          <TrayButton $width={24} aria-label="Battery"><BatteryIcon /></TrayButton>
          <TrayButton $width={24} aria-label="Volume"><VolumeIcon /></TrayButton>
          <TrayButton $width={34} aria-label="Language">ENG</TrayButton>
          <Clock>{'22:03\n27-01-2020'}</Clock>
          <TrayButton $width={36} aria-label="Notifications"><ActionCenterIcon /></TrayButton>
          <DesktopEdge />
        </Tray>
      </TaskBar>
    </Desktop>
  );
}
